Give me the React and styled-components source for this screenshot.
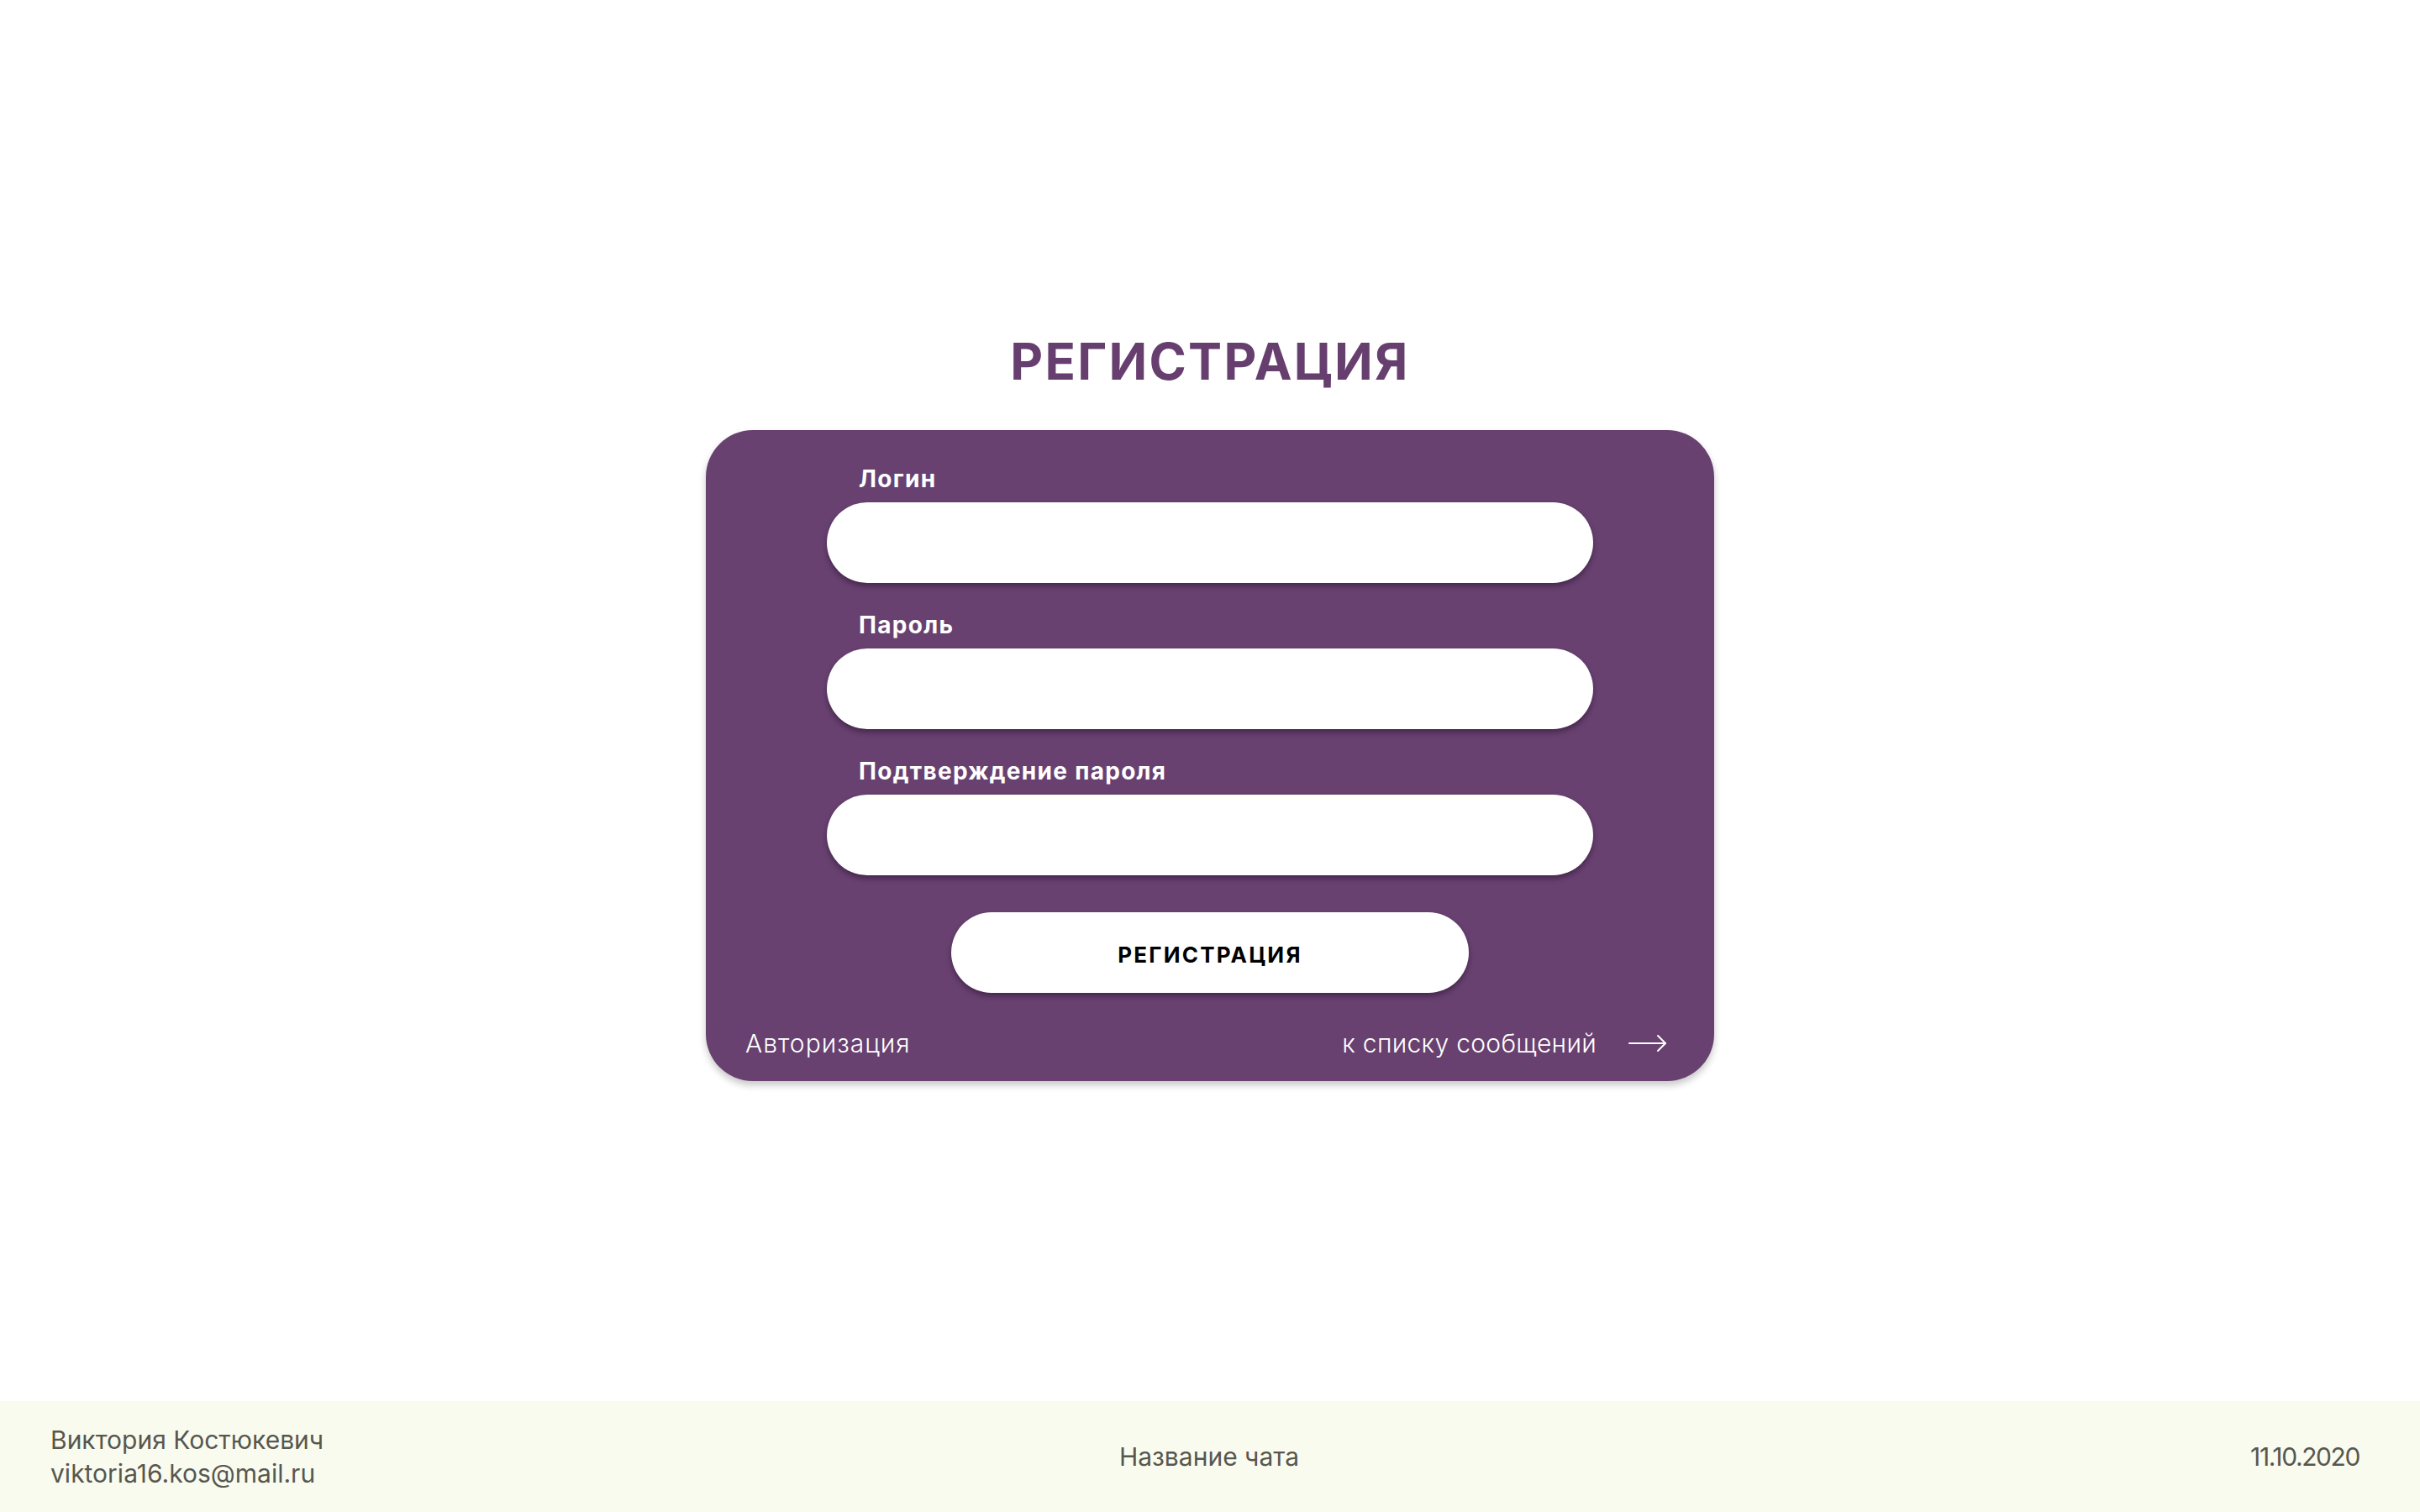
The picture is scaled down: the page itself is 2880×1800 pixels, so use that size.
import React from "react";
import styled, { createGlobalStyle } from "styled-components";

const GlobalStyle = createGlobalStyle`
  html, body {
    margin: 0;
    padding: 0;
    background: #ffffff;
  }
  body {
    font-family: Inter, "Noto Sans", "DejaVu Sans", sans-serif;
  }
  * { box-sizing: border-box; }
`;

const Page = styled.div`
  min-height: 100vh;
  display: grid;
  grid-template-rows: 1fr auto;
`;

const Main = styled.main`
  display: flex;
  flex-direction: column;
  align-items: center;
  padding-top: 394px;
`;

const Title = styled.h1`
  margin: 0 0 46px;
  font-size: 60px;
  line-height: 72px;
  font-weight: 700;
  color: #663f6f;
  letter-spacing: 2.3px;
`;

const Card = styled.form`
  width: 1200px;
  background: #684170;
  border-radius: 56px;
  box-shadow: 0 5px 8px rgba(0, 0, 0, 0.22);
  padding: 41px 56px 27px 47px;
  display: flex;
  flex-direction: column;
`;

const Fields = styled.div`
  width: 912px;
  align-self: center;
  margin-left: 9px;
  display: flex;
  flex-direction: column;
  gap: 33px;
`;

const Field = styled.label`
  display: flex;
  flex-direction: column;
  gap: 11px;
`;

const Label = styled.span`
  padding-left: 38px;
  font-size: 28px;
  line-height: 34px;
  font-weight: 700;
  letter-spacing: 1.3px;
  color: #ffffff;
`;

const Input = styled.input`
  width: 100%;
  height: 96px;
  border: none;
  outline: none;
  border-radius: 48px;
  background: #ffffff;
  box-shadow: 0 4px 6px rgba(30, 10, 35, 0.45);
  padding: 0 40px;
  font-size: 28px;
  font-family: inherit;
`;

const SubmitButton = styled.button`
  align-self: center;
  margin: 44px 0 0 9px;
  width: 616px;
  height: 96px;
  border: none;
  border-radius: 48px;
  background: #ffffff;
  box-shadow: 0 4px 6px rgba(30, 10, 35, 0.45);
  font-family: inherit;
  font-size: 26px;
  font-weight: 700;
  color: #000000;
  letter-spacing: 2.2px;
  padding: 4px 0 0;
  cursor: pointer;
`;

const Links = styled.div`
  margin-top: 42px;
  display: flex;
  justify-content: space-between;
  align-items: center;
  height: 36px;
`;

const TextLink = styled.a`
  display: flex;
  align-items: center;
  gap: ${(p) => (p.$gap ? p.$gap : "0px")};
  color: #ffffff;
  font-size: 30px;
  font-weight: 300;
  line-height: 36px;
  letter-spacing: ${(p) => (p.$spacing ? p.$spacing : "0.3px")};
  text-decoration: none;
  cursor: pointer;
`;

const Footer = styled.footer`
  height: 132px;
  background: #f9fbef;
  padding: 0 72px 0 60px;
  display: grid;
  grid-template-columns: 1fr auto 1fr;
  align-items: center;
  color: #57574f;
  font-size: 30px;
  font-weight: 400;
  line-height: 40px;
`;

const FooterLeft = styled.div`
  display: flex;
  flex-direction: column;
`;

const FooterCenter = styled.div`
  text-align: center;
  margin-left: 10px;
`;

const FooterRight = styled.div`
  text-align: right;
  letter-spacing: -1.4px;
`;

const Arrow = () => (
  <svg width="46" height="24" viewBox="0 0 46 24" fill="none">
    <path d="M1 12 H44" stroke="#fff" strokeWidth="2" strokeLinecap="round" />
    <path d="M35 3 L44 12 L35 21" stroke="#fff" strokeWidth="2" strokeLinecap="round" strokeLinejoin="round" />
  </svg>
);

export default function App() {
  return (
    <>
      <GlobalStyle />
      <Page>
        <Main>
          <Title>РЕГИСТРАЦИЯ</Title>
          <Card onSubmit={(e) => e.preventDefault()}>
            <Fields>
              <Field>
                <Label>Логин</Label>
                <Input type="text" />
              </Field>
              <Field>
                <Label>Пароль</Label>
                <Input type="password" />
              </Field>
              <Field>
                <Label>Подтверждение пароля</Label>
                <Input type="password" />
              </Field>
            </Fields>
            <SubmitButton type="submit">РЕГИСТРАЦИЯ</SubmitButton>
            <Links>
              <TextLink $spacing="1px">Авторизация</TextLink>
              <TextLink $gap="38px">
                к списку сообщений
                <Arrow />
              </TextLink>
            </Links>
          </Card>
        </Main>
        <Footer>
          <FooterLeft>
            <span>Виктория Костюкевич</span>
            <span>viktoria16.kos@mail.ru</span>
          </FooterLeft>
          <FooterCenter>Название чата</FooterCenter>
          <FooterRight>11.10.2020</FooterRight>
        </Footer>
      </Page>
    </>
  );
}
